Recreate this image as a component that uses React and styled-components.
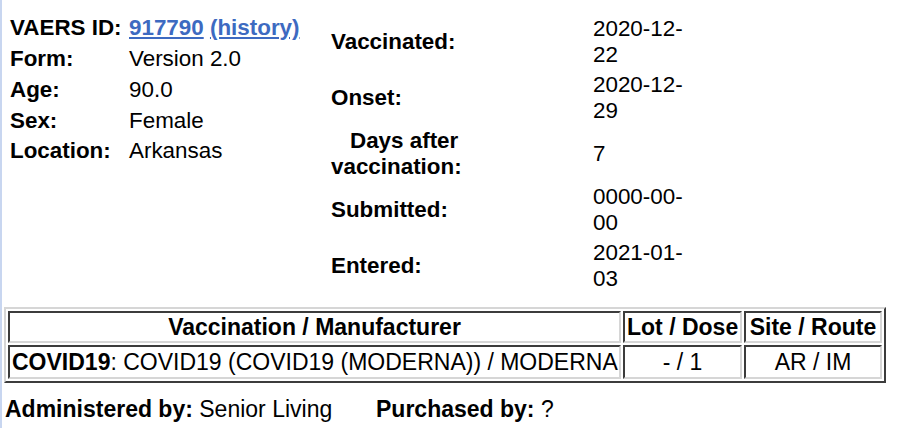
import { Fragment } from "react";
import styled, { createGlobalStyle } from "styled-components";

const GlobalStyle = createGlobalStyle`
  body {
    margin: 0;
    background: #fff;
    color: #000;
    font-family: "Liberation Sans", Arial, Helvetica, sans-serif;
  }
`;

const Page = styled.div`
  min-height: 100vh;
  box-sizing: border-box;
  border-left: 2px solid #c8d6f0;
  padding: 13px 0 0 2px;
`;

const Top = styled.div`
  display: flex;
  align-items: flex-start;
`;

const Details = styled.div`
  display: grid;
  grid-template-columns: 119px auto;
  grid-auto-rows: 30.75px;
  align-items: center;
  margin-left: 6px;
  width: 321px;
  font-size: 22.4px;
  line-height: 26px;
`;

const Dates = styled.div`
  display: grid;
  grid-template-columns: 262px auto;
  grid-auto-rows: 56px;
  align-items: center;
  margin-top: 1px;
  font-size: 22.4px;
  line-height: 26px;
`;

const Label = styled.div`
  font-weight: bold;
  text-indent: ${(p) => p.indent || 0}px;
  white-space: ${(p) => (p.wrap ? "normal" : "nowrap")};
`;

const Value = styled.div`
  white-space: nowrap;
`;

const Link = styled.a`
  color: #3d6ac1;
  font-weight: bold;
  text-decoration: underline;
`;

const Table = styled.table`
  margin-top: 13px;
  width: 882px;
  table-layout: fixed;
  border-collapse: separate;
  border-spacing: 2px;
  border-style: solid;
  border-width: 2px;
  border-color: #d6d6d6 #3c3c3c #3c3c3c #d6d6d6;
  font-size: 23px;
  line-height: 26px;
`;

const Cell = styled.td`
  border-style: solid;
  border-width: 2px;
  border-color: #3c3c3c #d6d6d6 #d6d6d6 #3c3c3c;
  padding: ${(p) => (p.head ? "1px 2px" : "2px 2px")};
  text-align: ${(p) => p.align || "center"};
  font-weight: ${(p) => (p.head ? "bold" : "normal")};
  white-space: nowrap;
  overflow: hidden;
`;

const Footer = styled.div`
  display: flex;
  margin-top: 13px;
  font-size: 23px;
  line-height: 26px;
  padding-left: 1px;
`;

const FooterItem = styled.div`
  width: ${(p) => p.width || "auto"};
  white-space: nowrap;
`;

const details = [
  ["Form:", "Version 2.0"],
  ["Age:", "90.0"],
  ["Sex:", "Female"],
  ["Location:", "Arkansas"],
];

const dates = [
  ["Vaccinated:", ["2020-12-", "22"]],
  ["Onset:", ["2020-12-", "29"]],
  ["Days after vaccination:", ["7"], 19],
  ["Submitted:", ["0000-00-", "00"]],
  ["Entered:", ["2021-01-", "03"]],
];

export default function App() {
  return (
    <Page>
      <GlobalStyle />
      <Top>
        <Details>
          <Label>VAERS ID:</Label>
          <Value>
            <Link href="#">917790</Link> <Link href="#">(history)</Link>
          </Value>
          {details.map(([k, v]) => (
            <Fragment key={k}>
              <Label>{k}</Label>
              <Value>{v}</Value>
            </Fragment>
          ))}
        </Details>
        <Dates>
          {dates.map(([k, lines, indent]) => (
            <Fragment key={k}>
              <Label indent={indent} wrap={indent ? 1 : 0}>
                {indent ? (
                  <>
                    Days after
                    <br />
                    vaccination:
                  </>
                ) : (
                  k
                )}
              </Label>
              <Value>
                {lines.map((l, i) => (
                  <div key={i}>{l}</div>
                ))}
              </Value>
            </Fragment>
          ))}
        </Dates>
      </Top>
      <Table>
        <colgroup>
          <col style={{ width: 613 }} />
          <col style={{ width: 119 }} />
          <col style={{ width: 138 }} />
        </colgroup>
        <tbody>
          <tr>
            <Cell as="th" head>
              Vaccination / Manufacturer
            </Cell>
            <Cell as="th" head>
              Lot / Dose
            </Cell>
            <Cell as="th" head>
              Site / Route
            </Cell>
          </tr>
          <tr>
            <Cell align="left">
              <b>COVID19</b>: COVID19 (COVID19 (MODERNA)) / MODERNA
            </Cell>
            <Cell>- / 1</Cell>
            <Cell>AR / IM</Cell>
          </tr>
        </tbody>
      </Table>
      <Footer>
        <FooterItem width="371px">
          <b>Administered by:</b> Senior Living
        </FooterItem>
        <FooterItem>
          <b>Purchased by:</b> ?
        </FooterItem>
      </Footer>
    </Page>
  );
}
